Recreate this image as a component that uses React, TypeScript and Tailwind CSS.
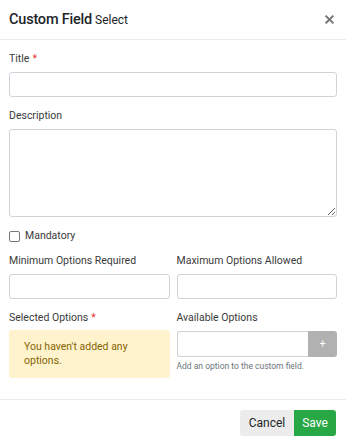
import React from "react";

function Label({ children, required }: { children: React.ReactNode; required?: boolean }) {
  return (
    <div className="h-[14px] text-[10.5px] leading-[14px] text-[#3a3a3a]">
      {children}
      {required && <span className="ml-[3px] text-[#e3342f]">*</span>}
    </div>
  );
}

export default function App() {
  return (
    <div className="h-[445px] w-[346px] bg-white font-['Roboto',sans-serif] text-[#222]">
      <div className="flex h-[40px] items-center justify-between border-b border-[#e9ecef] px-[9px]">
        <div className="flex items-baseline gap-[3px]">
          <span className="text-[14.5px] font-medium tracking-[-0.2px] text-[#212529]">Custom Field</span>
          <span className="text-[12px] text-[#212529]">Select</span>
        </div>
        <svg width="9" height="9" viewBox="0 0 10 10" className="mr-[3px]">
          <path d="M1.5 1.5 L8.5 8.5 M8.5 1.5 L1.5 8.5" stroke="#777" strokeWidth="2.2" strokeLinecap="square" />
        </svg>
      </div>

      <div className="px-[9px] pt-[12px]">
        <Label required>Title</Label>
        <input className="mt-[6px] block h-[25px] w-full rounded-[3px] border border-[#ced4da]" />

        <div className="mt-[12px]">
          <Label>Description</Label>
        </div>
        <textarea className="mt-[6px] block h-[88px] w-full resize-y rounded-[3px] border border-[#ced4da]" />

        <label className="mt-[12px] flex h-[14px] items-center gap-[5px] text-[10.5px] text-[#3a3a3a]">
          <span className="block h-[11px] w-[11px] rounded-[2px] border border-[#777] bg-white" />
          Mandatory
        </label>

        <div className="mt-[11px] grid grid-cols-2 gap-x-[7px]">
          <div>
            <Label>Minimum Options Required</Label>
            <input className="mt-[6px] block h-[25px] w-full rounded-[3px] border border-[#ced4da]" />
          </div>
          <div>
            <Label>Maximum Options Allowed</Label>
            <input className="mt-[6px] block h-[25px] w-full rounded-[3px] border border-[#ced4da]" />
          </div>

          <div className="mt-[12px]">
            <Label required>Selected Options</Label>
            <div className="mt-[5px] h-[48px] rounded-[3px] bg-[#fff3cd] px-[15px] py-[10px] text-[10.5px] leading-[14px] text-[#856404]">
              You haven't added any options.
            </div>
          </div>
          <div className="mt-[12px]">
            <Label>Available Options</Label>
            <div className="mt-[6px] flex h-[26px]">
              <input className="block h-full min-w-0 flex-1 rounded-l-[3px] border border-r-0 border-[#ced4da]" />
              <div className="flex w-[29px] items-center justify-center rounded-r-[3px] bg-[#b1b1b1] text-[11px] text-white">
                +
              </div>
            </div>
            <div className="mt-[3px] text-[8.5px] leading-[12px] text-[#6c757d]">Add an option to the custom field.</div>
          </div>
        </div>
      </div>

      <div className="mt-[21px] flex justify-end border-t border-[#e9ecef] px-[10px] pt-[10px]">
        <button className="h-[26px] w-[54px] rounded-l-[3px] bg-[#ececec] text-[12px] text-[#212529]">Cancel</button>
        <button className="h-[26px] w-[42px] rounded-r-[3px] bg-[#28a745] text-[12px] text-white">Save</button>
      </div>
    </div>
  );
}
